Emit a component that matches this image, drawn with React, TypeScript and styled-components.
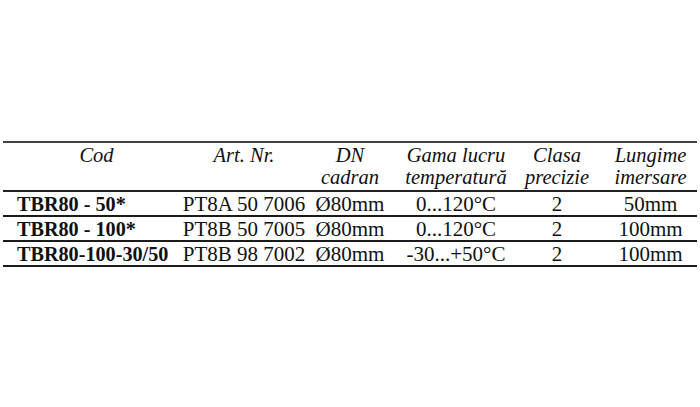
import React from "react";
import styled, { createGlobalStyle } from "styled-components";

const Global = createGlobalStyle`
  html, body { margin: 0; padding: 0; background: #fff; }
  body { width: 700px; height: 407px; overflow: hidden; }
`;

const Page = styled.div`
  width: 700px;
  height: 407px;
  padding: 141px 3px 0 3px;
  box-sizing: border-box;
  font-family: "Liberation Serif", "Times New Roman", serif;
  color: #111;
`;

const Table = styled.div`
  width: 694px;
  border-top: 2px solid #444;
`;

const cols = "187px 108px 104px 108px 94px 93px";

const HeadRow = styled.div`
  display: grid;
  grid-template-columns: ${cols};
  height: 46px;
  padding-top: 1px;
  box-sizing: content-box;
  border-bottom: 2px solid #222;
`;

const Row = styled.div`
  display: grid;
  grid-template-columns: ${cols};
  height: 23px;
  border-bottom: 2px solid #1a1a1a;
`;

const HeadCell = styled.div`
  display: flex;
  flex-direction: column;
  align-items: center;
  font-style: italic;
  font-size: 20.5px;
  line-height: 22px;
  white-space: nowrap;
`;

const Cell = styled.div<{ $bold?: boolean; $left?: boolean }>`
  display: flex;
  justify-content: ${(p) => (p.$left ? "flex-start" : "center")};
  padding: 1px 0 0 ${(p) => (p.$left ? "14px" : "0")};
  font-size: ${(p) => (p.$bold ? "20.2px" : "21px")};
  line-height: 22px;
  font-weight: ${(p) => (p.$bold ? 700 : 400)};
  white-space: nowrap;
`;

const headers = [
  ["Cod"],
  ["Art. Nr."],
  ["DN", "cadran"],
  ["Gama lucru", "temperatură"],
  ["Clasa", "precizie"],
  ["Lungime", "imersare"],
];

const rows = [
  ["TBR80 - 50*", "PT8A 50 7006", "Ø80mm", "0...120°C", "2", "50mm"],
  ["TBR80 - 100*", "PT8B 50 7005", "Ø80mm", "0...120°C", "2", "100mm"],
  ["TBR80-100-30/50", "PT8B 98 7002", "Ø80mm", "-30...+50°C", "2", "100mm"],
];

export default function App() {
  return (
    <>
      <Global />
      <Page>
        <Table>
          <HeadRow>
            {headers.map((h, i) => (
              <HeadCell key={i}>
                {h.map((l, j) => (
                  <span key={j}>{l}</span>
                ))}
              </HeadCell>
            ))}
          </HeadRow>
          {rows.map((r, i) => (
            <Row key={i}>
              {r.map((c, j) => (
                <Cell key={j} $bold={j === 0} $left={j === 0}>
                  {c}
                </Cell>
              ))}
            </Row>
          ))}
        </Table>
      </Page>
    </>
  );
}
